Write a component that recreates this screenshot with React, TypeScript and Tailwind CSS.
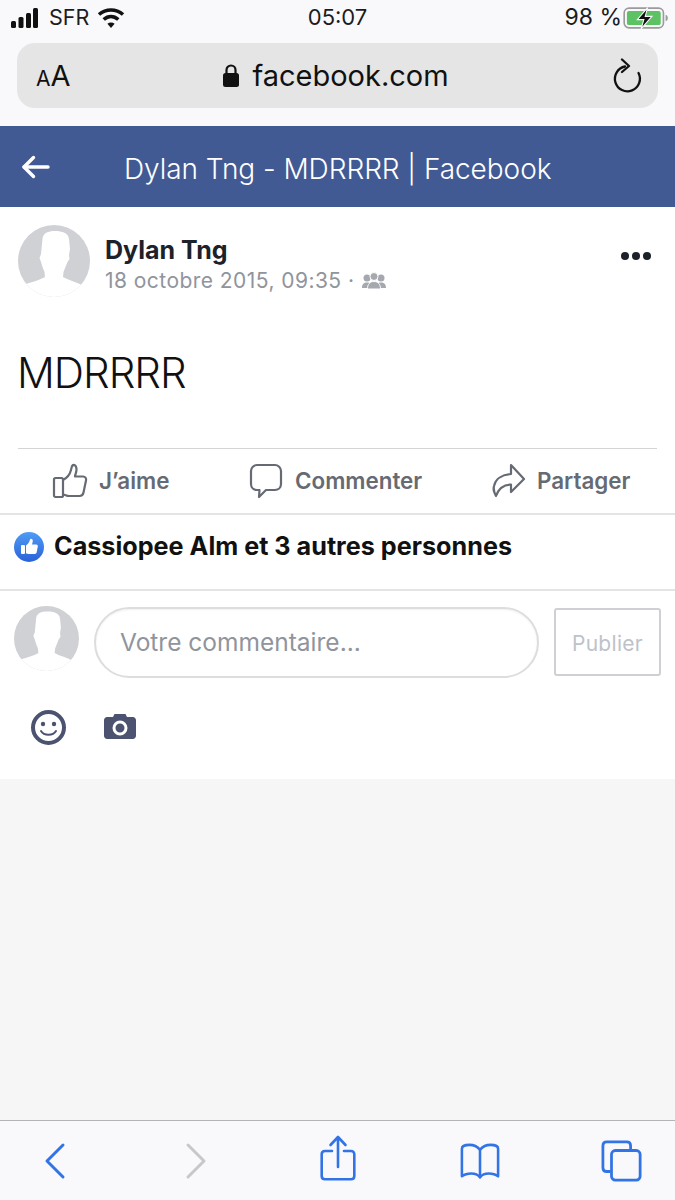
const font = { fontFamily: "Inter, 'Liberation Sans', sans-serif" };

function Avatar({ className }: { className: string }) {
  return (
    <svg viewBox="0 0 72 72" className={className}>
      <defs>
        <clipPath id="avatar-clip">
          <circle cx="36" cy="36" r="36" />
        </clipPath>
      </defs>
      <circle cx="36" cy="36" r="36" fill="#ffffff" />
      <g clipPath="url(#avatar-clip)">
        <rect width="72" height="72" fill="#d0d1d5" />
        <path
          d="M37 6C30 6 25 8 24.500 14L23.500 24 23 29 21.500 33 23 37 24.500 42 26.500 47 27 52C22 55 14 57 8 59L0 64V72H72V64L64 60C58 57 50 55 45 52L45.500 47 47.500 42 49.500 37 51.500 34 51 30 52 24 51 14C50.500 8 44 6 37 6Z"
          fill="#ffffff"
        />
      </g>
    </svg>
  );
}

function StatusBar() {
  return (
    <div className="flex h-[34px] items-center justify-between pl-[10px] pr-[6px] pt-[1px] text-[22px] text-[#1c1c1e]">
      <div className="flex w-[198px] items-center">
        <svg width="29" height="22" viewBox="0 0 29 22" fill="#111">
          <rect x="1" y="14" width="5" height="7" rx="1.500" />
          <rect x="8.500" y="10" width="5" height="11" rx="1.500" />
          <rect x="16" y="6" width="5" height="15" rx="1.500" />
          <rect x="23" y="1" width="5" height="20" rx="1.500" />
        </svg>
        <span className="ml-[10px] text-[21.500px]">SFR</span>
        <svg width="28" height="22" viewBox="0 0 28 22" className="ml-[8px]" fill="none" stroke="#111" strokeWidth="3.600">
          <path d="M2 7.500c7-6 17-6 24 0" />
          <path d="M6.700 12.500c4.500-4 10-4 14.600 0" />
          <path d="M14 21l-3.600-4.300c2-1.700 5.200-1.700 7.200 0z" fill="#111" stroke="none" />
        </svg>
      </div>
      <span>05:07</span>
      <div className="flex w-[202px] items-center justify-end">
        <span className="text-[23px]">98 %</span>
        <svg width="46" height="24" viewBox="0 0 42 22" className="ml-[1px]">
          <rect x="1" y="2" width="36" height="18" rx="4.500" fill="none" stroke="#9b9b9b" strokeWidth="1.500" />
          <rect x="3.500" y="4.500" width="31" height="13" rx="2" fill="#5dc264" />
          <path d="M39 8v6c1.500-.5 2-1.500 2-3s-.5-2.500-2-3z" fill="#9b9b9b" />
          <path d="M22.500 1.500L13 12.500h6l-2.500 8.500 10-11.500h-6.200z" fill="#111" stroke="#f9f9fb" strokeWidth="1" />
        </svg>
      </div>
    </div>
  );
}

function UrlBar() {
  return (
    <div className="mx-[17px] mt-[9px] flex h-[65px] items-center justify-between rounded-[18px] bg-[#e5e5e5] pl-[19px] pr-[15px] text-[#111]">
      <div className="flex w-[60px] items-baseline">
        <span className="text-[21px] leading-none">A</span>
        <span className="text-[29px] leading-none">A</span>
      </div>
      <div className="flex items-center pr-[36px]">
        <svg width="18" height="25" viewBox="0 0 18 25" fill="#111">
          <path d="M4.500 11V7a4.500 4.500 0 0 1 9 0v4" fill="none" stroke="#111" strokeWidth="2.200" />
          <rect x="1" y="10" width="16" height="14" rx="2.500" />
        </svg>
        <span className="ml-[12px] text-[29px] leading-none">facebook.com</span>
      </div>
      <svg width="32" height="36" viewBox="0 0 32 36" fill="none" stroke="#111" strokeWidth="2.300" strokeLinecap="round" strokeLinejoin="round">
        <path d="M14 8.500A12.500 12.500 0 1 0 27.500 15" />
        <path d="M11 1.500l7 6.500-7 6" />
      </svg>
    </div>
  );
}

function TitleBar() {
  return (
    <div className="flex h-[81px] items-center bg-[#425a94] text-white">
      <svg width="30" height="26" viewBox="0 0 30 26" className="ml-[21px]" fill="none" stroke="#fff" strokeWidth="3.400" strokeLinecap="round" strokeLinejoin="round">
        <path d="M27 13H3" />
        <path d="M12.500 3.500L3 13l9.500 9.500" />
      </svg>
      <span className="ml-[73px] mt-[5px] text-[28px] font-light leading-none tracking-[-0.05px]">Dylan Tng - MDRRRR | Facebook</span>
    </div>
  );
}

function PostHeader() {
  return (
    <div className="flex items-start pl-[18px] pr-[24px] pt-[18px]">
      <Avatar className="h-[72px] w-[72px]" />
      <div className="ml-[15px] flex-1">
        <div className="pt-[10px] text-[25px] font-bold leading-[30px] text-[#1d2129]">Dylan Tng</div>
        <div className="flex items-center pt-[1px] text-[21px] leading-[30px] tracking-[0.45px] text-[#90949c]">
          18 octobre 2015, 09:35 ·
          <svg width="24" height="20" viewBox="0 0 24 20" fill="#a5a8ae" className="ml-[8px]">
            <circle cx="5" cy="7" r="3.500" />
            <circle cx="19" cy="7" r="3.500" />
            <path d="M0 17c0-4 2-5.500 5-5.500s5 1.500 5 5.500zM14 17c0-4 2-5.500 5-5.500s5 1.500 5 5.500z" />
            <circle cx="12" cy="5.500" r="4" stroke="#fff" strokeWidth="1" />
            <path d="M5.500 18c0-5 2.500-7.500 6.500-7.500s6.500 2.500 6.500 7.500z" stroke="#fff" strokeWidth="1" />
          </svg>
        </div>
      </div>
      <div className="mt-[27px] flex gap-[3px]">
        <span className="h-[8px] w-[8px] rounded-full bg-[#1d2129]" />
        <span className="h-[8px] w-[8px] rounded-full bg-[#1d2129]" />
        <span className="h-[8px] w-[8px] rounded-full bg-[#1d2129]" />
      </div>
    </div>
  );
}

function ActionRow() {
  return (
    <div className="flex h-[64px] items-center text-[22.400px] font-semibold text-[#666a73]">
      <div className="ml-[52px] flex w-[197px] items-center">
        <svg width="36" height="36" viewBox="0 0 36 36" fill="none" stroke="#666a73" strokeWidth="2.200" strokeLinejoin="round">
          <rect x="2" y="15" width="9" height="19" rx="1.500" />
          <path d="M11 17c4-2 7-6 8-10 .5-2 .5-4 2-5 2.500-.5 3.500 2 3.500 4.500 0 3-1.500 5.500-1.500 7h8c2.500 0 3.500 2 3 4l-2.500 12c-.4 2-1.500 3.500-4 3.500H17c-2.500 0-4-1.500-6-1.500" />
        </svg>
        <span className="ml-[11px]">J’aime</span>
      </div>
      <div className="flex w-[243px] items-center">
        <svg width="34" height="36" viewBox="0 0 34 36" fill="none" stroke="#666a73" strokeWidth="2.200" strokeLinejoin="round">
          <path d="M8 2h18c3 0 6 2.500 6 6v13c0 4-3 6-6 6H17l-7 7 .5-7H8c-3 0-6-2-6-6V8c0-3.500 3-6 6-6z" />
        </svg>
        <span className="ml-[12px]">Commenter</span>
      </div>
      <div className="flex items-center">
        <svg width="34" height="36" viewBox="0 0 34 36" fill="none" stroke="#666a73" strokeWidth="2.200" strokeLinejoin="round">
          <path d="M19 2l13 14-13 13v-7.500c-7 0-12 3-15 11.500C2 29 1 27 2 23c1.500-7 8-11.500 17-12z" />
        </svg>
        <span className="ml-[11px]">Partager</span>
      </div>
    </div>
  );
}

function LikesRow() {
  return (
    <div className="flex h-[78px] items-center border-y-2 border-[#e4e4e4] pb-[11px] pl-[14px]">
      <svg width="30" height="30" viewBox="0 0 30 30">
        <defs>
          <linearGradient id="like-grad" x1="0" y1="0" x2="0" y2="1">
            <stop offset="0" stopColor="#4f9cf5" />
            <stop offset="1" stopColor="#2a62d8" />
          </linearGradient>
        </defs>
        <circle cx="15" cy="15" r="15" fill="url(#like-grad)" />
        <rect x="7" y="13" width="4" height="9" rx="1" fill="#fff" />
        <path d="M12 13.500c2-1.500 3.500-3.500 4-6 .3-1.500 2.800-1 2.800 1.200 0 1.500-.6 2.800-.8 3.800h4.200c1.300 0 1.800 1 1.600 2l-1.100 5.800c-.2 1-.9 1.700-2 1.700H15c-1.300 0-2-.6-3-.6z" fill="#fff" />
      </svg>
      <span className="ml-[10px] text-[25.200px] font-bold leading-none text-[#111]">Cassiopee Alm et 3 autres personnes</span>
    </div>
  );
}

function CommentBox() {
  return (
    <div className="pl-[14px] pr-[14px] pt-[16px]">
      <div className="flex items-start">
        <Avatar className="-mt-[1px] h-[65px] w-[65px]" />
        <div className="ml-[15px] flex h-[71px] w-[445px] items-center rounded-[36px] border-2 border-[#dcdddf] pl-[24px] text-[24.500px] text-[#90949c] shadow-[inset_0_1px_2px_rgba(0,0,0,0.06)]">
          Votre commentaire...
        </div>
        <div className="ml-[15px] mt-[1px] flex h-[68px] w-[107px] items-center justify-center rounded-[3px] border-2 border-[#cfd0d3] pt-[3px] text-[21px] tracking-[0.3px] text-[#bec2c9]">
          Publier
        </div>
      </div>
      <div className="mt-[32px] flex items-start pl-[17px]">
        <svg width="35" height="35" viewBox="0 0 35 35">
          <circle cx="17.500" cy="17.500" r="15.500" fill="#fff" stroke="#4b5370" strokeWidth="4" />
          <circle cx="12" cy="14" r="2.200" fill="#4b5370" />
          <circle cx="23" cy="14" r="2.200" fill="#4b5370" />
          <path d="M10 21c3 5 12 5 15 0" fill="none" stroke="#4b5370" strokeWidth="2" strokeLinecap="round" />
        </svg>
        <svg width="32" height="25" viewBox="0 0 32 25" className="ml-[38px] mt-[4px]">
          <path d="M3 3h6l1.500-3h11L23 3h6c1.500 0 3 1.500 3 3v16c0 1.500-1.500 3-3 3H3c-1.500 0-3-1.500-3-3V6c0-1.500 1.500-3 3-3z" fill="#4b5370" />
          <circle cx="16" cy="14" r="6" fill="none" stroke="#fff" strokeWidth="3" />
        </svg>
      </div>
    </div>
  );
}

function Toolbar() {
  return (
    <div className="flex h-[80px] items-start border-t border-[#b4b4b6] bg-[#f9f9fb] pt-[17px]">
      <svg width="32" height="46" viewBox="0 0 32 46" className="ml-[39px]" fill="none" stroke="#3274e6" strokeWidth="3" strokeLinecap="round" strokeLinejoin="round">
        <path d="M24 7L8 23 24 39" />
      </svg>
      <svg width="32" height="46" viewBox="0 0 32 46" className="ml-[109px]" fill="none" stroke="#c8c8ca" strokeWidth="3" strokeLinecap="round" strokeLinejoin="round">
        <path d="M8 7l16 16L8 39" />
      </svg>
      <svg width="36" height="46" viewBox="0 0 36 46" className="ml-[108px] -mt-[3px]" fill="none" stroke="#3274e6" strokeWidth="2.600" strokeLinecap="round" strokeLinejoin="round">
        <path d="M18 32V3M10.500 10L18 2l7.500 8" />
        <path d="M12 16H5c-2 0-3.300 1.300-3.300 3.300V41c0 2 1.300 3.300 3.300 3.300h26c2 0 3.300-1.300 3.300-3.300V19.300c0-2-1.300-3.300-3.300-3.300h-7" />
      </svg>
      <svg width="40" height="40" viewBox="0 0 42 42" className="ml-[104px] mt-[4px]" fill="none" stroke="#3274e6" strokeWidth="2.700" strokeLinejoin="round" strokeLinecap="round">
        <path d="M21 8c-3-3.500-7-5-11-5-3.500 0-8 .5-8 4v29c3-2.500 7-3 10-3 4 0 7 1.500 9 4 2-2.500 5-4 9-4 3 0 7 .5 10 3V7c0-3.500-4.500-4-8-4-4 0-8 1.500-11 5z" />
        <path d="M21 8v29" />
      </svg>
      <svg width="42" height="42" viewBox="0 0 44 44" className="ml-[101px] mt-[2px]" fill="none" stroke="#3274e6" strokeWidth="2.900" strokeLinejoin="round">
        <path d="M10 33H6c-2.500 0-4-1.500-4-4V6c0-2.500 1.500-4 4-4h21c2.500 0 4 1.500 4 4v4" />
        <rect x="11" y="11" width="30" height="31" rx="4" />
      </svg>
    </div>
  );
}

export default function App() {
  return (
    <div style={font} className="flex h-[1200px] w-[675px] flex-col overflow-hidden bg-[#f6f6f7]">
      <div className="h-[126px] bg-[#f9f9fb]">
        <StatusBar />
        <UrlBar />
      </div>
      <TitleBar />
      <div className="h-[572px] bg-white">
        <PostHeader />
        <div className="mt-[50px] pl-[17px] text-[42px] font-light leading-[52px] tracking-[-1px] text-[#111]">MDRRRR</div>
        <div className="mx-[18px] mt-[49px] h-[1px] bg-[#d3d4d6]" />
        <ActionRow />
        <LikesRow />
        <CommentBox />
      </div>
      <div className="flex-1" />
      <Toolbar />
    </div>
  );
}
